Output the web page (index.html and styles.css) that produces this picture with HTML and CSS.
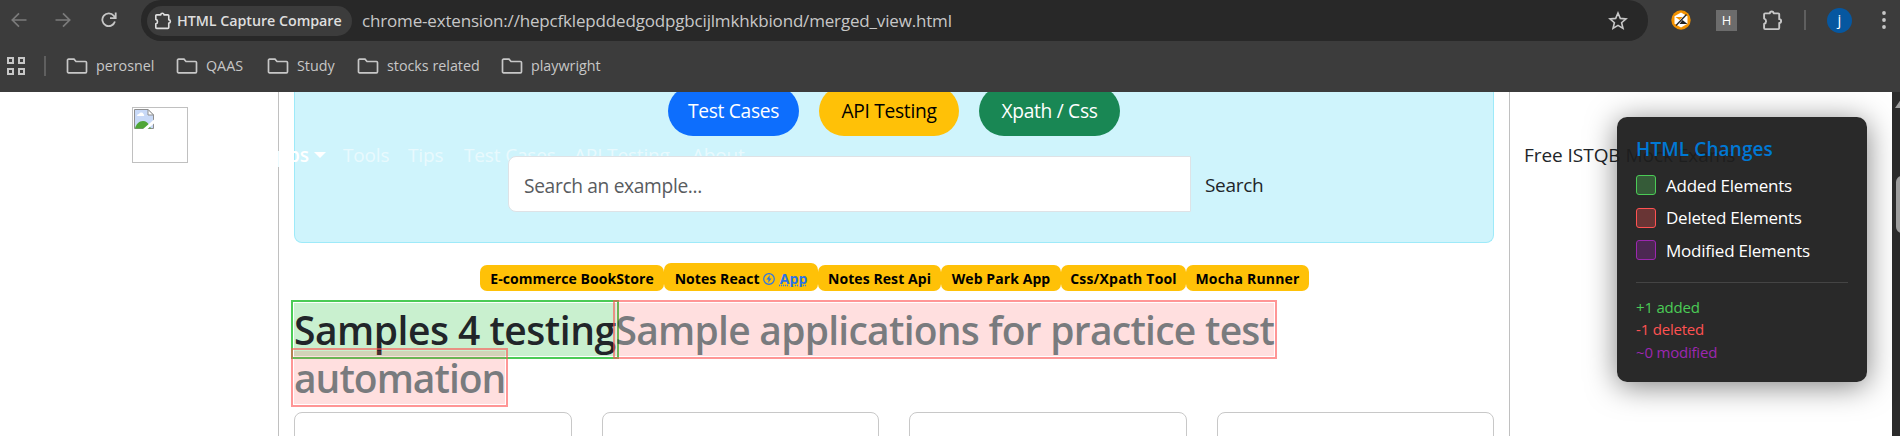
FILE: index.html
```html
<!DOCTYPE html>
<html lang="en">
<head>
<meta charset="utf-8">
<title>HTML Capture Compare</title>
<link rel="stylesheet" href="styles.css">
</head>
<body>
<svg width="0" height="0" class="defs">
  <symbol id="folder" viewBox="0 0 22 16"><path d="M2.500 1.200H8l2 2.300h9.500a1 1 0 0 1 1 1v9.300a1 1 0 0 1-1 1h-17a1 1 0 0 1-1-1V2.200a1 1 0 0 1 1-1z" fill="none" stroke="#c7c7c7" stroke-width="1.700"/></symbol>
  <symbol id="puzzle" viewBox="0 0 20 20"><path d="M2 4.200a1 1 0 0 1 1-1h4.500a1.800 1.800 0 0 1 3.600 0h4.300a1 1 0 0 1 1 1v4.500a1.800 1.800 0 0 1 0 3.600v4.900a1 1 0 0 1-1 1H3a1 1 0 0 1-1-1v-4a2.600 2.600 0 0 0 0-5z" fill="none" stroke="currentColor" stroke-width="1.800" stroke-linejoin="round"/></symbol>
</svg>
<header class="chrome">
  <div class="toolbar">
    <svg class="nav-icon" width="16" height="16" viewBox="0 0 16 16"><path d="M15.500 8H1.500M8 1.300L1.300 8 8 14.700" fill="none" stroke="#7b7b7b" stroke-width="1.700"/></svg>
    <svg class="nav-icon" width="16" height="16" viewBox="0 0 16 16"><path d="M.5 8h14M8 1.300L14.700 8 8 14.700" fill="none" stroke="#7b7b7b" stroke-width="1.700"/></svg>
    <svg class="nav-icon" width="16" height="16" viewBox="0 0 16 16"><path d="M13.900 9.500A6.400 6.400 0 1 1 12.800 3.800L14.500 5.700M14.700.5v5.700H9" fill="none" stroke="#c7c7c7" stroke-width="1.800"/></svg>
    <div class="omnibox">
      <div class="chip"><svg width="18" height="18"><use href="#puzzle"/></svg><span class="chip-text">HTML Capture Compare</span></div>
      <span class="url">chrome-extension://hepcfklepddedgodpgbcijlmkhkbiond/merged_view.html</span>
      <svg class="star" width="20" height="20" viewBox="0 0 20 20"><path d="M10 2l2.300 5.400 5.700.5-4.400 3.800 1.400 5.700-5-3-5 3 1.400-5.700L2 7.900l5.700-.5z" fill="none" stroke="#c7c7c7" stroke-width="1.600"/></svg>
    </div>
    <div class="extensions">
      <svg width="20" height="20" viewBox="0 0 20 20"><circle cx="10" cy="10" r="9.700" fill="#f39200"/><path d="M10 2.500l6.500 3.700v7.600L10 17.500l-6.500-3.700V6.200z" fill="#fff"/><path d="M4.500 7h7L8.500 10z" fill="#f39200"/><path d="M8.500 14h8l-5-4z" fill="#222"/><path d="M5 15.500L15.500 4.500" stroke="#222" stroke-width="1.300"/></svg>
      <span class="ext-h">H</span>
      <svg class="ext-puzzle" width="21" height="21"><use href="#puzzle"/></svg>
      <span class="divider"></span>
      <span class="avatar">j</span>
      <svg width="4" height="18" viewBox="0 0 4 18"><g fill="#c7c7c7"><circle cx="2" cy="2" r="1.900"/><circle cx="2" cy="9" r="1.900"/><circle cx="2" cy="16" r="1.900"/></g></svg>
    </div>
  </div>
  <nav class="bookmarks">
    <svg class="grid-icon" width="18" height="18" viewBox="0 0 18 18"><path d="M1 1h5v5H1zM12 1h5v5h-5zM1 12h5v5H1zM12 12h5v5h-5z" fill="none" stroke="#c7c7c7" stroke-width="2"/></svg>
    <span class="divider"></span>
    <a class="bm bm-1"><svg width="22" height="16"><use href="#folder"/></svg><span>perosnel</span></a>
    <a class="bm bm-2"><svg width="22" height="16"><use href="#folder"/></svg><span>QAAS</span></a>
    <a class="bm bm-3"><svg width="22" height="16"><use href="#folder"/></svg><span>Study</span></a>
    <a class="bm bm-4"><svg width="22" height="16"><use href="#folder"/></svg><span>stocks related</span></a>
    <a class="bm bm-5"><svg width="22" height="16"><use href="#folder"/></svg><span>playwright</span></a>
  </nav>
</header>
<div class="viewport">
  <aside class="left">
    <div class="logo"><svg width="20" height="20" viewBox="0 0 20 20"><path d="M.5.500h13.500l5.500 5.500v13.500H.5z" fill="#c8d9f7" stroke="#8f8f8f"/><path d="M3 7a2 2 0 0 1 2-2 2.500 2.500 0 0 1 4.500 0A1.500 1.500 0 0 1 10 7z" fill="#fff"/><path d="M1 19.500c1-4 4-7.500 8-7.500 3 0 5 2 6 4l2 3.500z" fill="#4fa637"/><path d="M14 .5V6h5.500z" fill="#fff" stroke="#8f8f8f"/><path d="M8.500 20.500L20.500 10v4L13 20.500z" fill="#fff"/></svg></div>
  </aside>
  <main class="main">
    <section class="hero">
      <div class="pills">
        <a class="pill blue"><span>Test Cases</span></a>
        <a class="pill yellow"><span>API Testing</span></a>
        <a class="pill green"><span>Xpath / Css</span></a>
      </div>
      <div class="search"><div class="field"><span>Search an example...</span></div><span class="search-btn">Search</span></div>
    </section>
    <div class="badges">
      <span class="badge b1">E-commerce BookStore</span>
      <span class="badge b2">Notes React<svg width="12" height="12" viewBox="0 0 12 12"><circle cx="6" cy="6" r="5.300" fill="none" stroke="#2a73e8" stroke-width="1.200"/><path d="M6.800 2L3.500 6.600h2L5.200 10l3.300-4.600h-2z" fill="#2a73e8"/></svg><u>App</u></span>
      <span class="badge b3">Notes Rest Api</span>
      <span class="badge b4">Web Park App</span>
      <span class="badge b5">Css/Xpath Tool</span>
      <span class="badge b6">Mocha Runner</span>
    </div>
    <h1 class="title"><ins>Samples 4 testing</ins><del>Sample applications for practice test<br><span class="wrap">automation</span></del></h1>
    <div class="cards"><div class="card"></div><div class="card"></div><div class="card"></div><div class="card"></div></div>
  </main>
  <aside class="right"><span class="exams">Free ISTQB Mock Exams</span></aside>
  <div class="scrollbar"><i class="arrow"></i><i class="thumb"></i></div>
  <nav class="sitenav">
    <a class="n1">Apps<i class="caret"></i></a><a class="n2">Tools</a><a class="n3">Tips</a><a class="n4">Test Cases</a><a class="n5">API Testing</a><a class="n6">About</a>
  </nav>
  <section class="panel">
    <h2>HTML Changes</h2>
    <div class="row"><i class="sw added"></i><span class="r1">Added Elements</span></div>
    <div class="row"><i class="sw deleted"></i><span class="r2">Deleted Elements</span></div>
    <div class="row"><i class="sw modified"></i><span class="r3">Modified Elements</span></div>
    <div class="stats"><div class="c-add"><span>+1 added</span></div><div class="c-del"><span>-1 deleted</span></div><div class="c-mod"><span>~0 modified</span></div></div>
  </section>
</div>
</body>
</html>
```

FILE: styles.css
```css
* { box-sizing: border-box; }
body { margin: 0; width: 1900px; height: 436px; overflow: hidden; font-family: "Open Sans", "Noto Sans", sans-serif; color: #212529; background: #fff; white-space: nowrap; }
.defs { position: absolute; }
svg { display: block; flex: none; }

.chrome { height: 92px; background: #3c3c3c; color: #c7c7c7; }
.toolbar { display: flex; align-items: flex-start; height: 41px; }
.nav-icon { margin: 12px 0 0 11px; }
.nav-icon + .nav-icon { margin-left: 28px; }
.nav-icon:nth-child(3) { margin-left: 30px; }
.omnibox { margin-left: 24px; width: 1507px; height: 41px; background: #282828; border-radius: 20px; display: flex; align-items: center; padding: 0 20px 0 6px; }
.chip { width: 205px; height: 30px; border-radius: 15px; background: #3c3c3c; display: flex; align-items: center; padding-left: 7px; gap: 5px; color: #dedede; }
.chip-text { font-size: 14.300px; font-weight: 600; letter-spacing: -0.050px; }
.url { margin-left: 10px; font-size: 17px; letter-spacing: -0.170px; }
.star { margin-left: auto; }
.extensions { display: flex; align-items: center; height: 40px; margin-left: 23px; }
.ext-h { margin-left: 25px; width: 21px; height: 21px; background: #6c6c6c; color: #fff; font-size: 13px; line-height: 21px; text-align: center; }
.ext-puzzle { margin-left: 25px; }
.divider { width: 2px; height: 20px; background: #5f5f5f; }
.extensions .divider { margin-left: 21px; }
.avatar { margin: 0 30px 0 21px; width: 25px; height: 25px; border-radius: 50%; background: #0657a0; color: #fff; font-size: 15px; line-height: 22px; text-align: center; }
.bookmarks { display: flex; align-items: center; height: 51px; padding: 0 0 1px 7px; }
.bookmarks .divider { margin-left: 19px; margin-right: 20px; }
.bm { display: flex; align-items: center; gap: 8px; font-size: 14.300px; flex: none; }
.bm span { margin-top: -2px; }
.bm-1 { width: 110px; }
.bm-2 { width: 91px; }
.bm-3 { width: 90px; }
.bm-4 { width: 144px; }

.viewport { position: relative; height: 344px; overflow: hidden; display: flex; background: #fff; }
.left { width: 278px; padding: 15px 0 0 132px; }
.logo { width: 56px; height: 56px; border: 1px solid #c0c0c0; padding: 1px; }
.main { width: 1232px; border: solid #c0c0c0; border-width: 0 1px; padding: 0 15px; }
.hero { height: 151px; background: #cff4fc; border: 1px solid #9eeaf9; border-top: 0; border-radius: 0 0 8px 8px; }
.pills { display: flex; justify-content: center; gap: 20px; height: 44px; align-items: flex-end; }
.pill { height: 50px; border-radius: 25px; font-size: 19.200px; letter-spacing: -0.300px; line-height: 50px; text-align: center; color: #fff; }
.blue { width: 131px; background: #0d6efd; }
.yellow { width: 140px; background: #ffc107; color: #000; }
.green { width: 141px; background: #198754; }
.search { display: flex; align-items: center; margin: 20px 0 0 213px; }
.field { position: relative; z-index: 3; width: 683px; height: 56px; border: 1px solid #dee2e6; border-radius: 8px 0 0 8px; background: #fff; color: #595c5f; font-size: 19.200px; letter-spacing: -0.350px; line-height: 57px; padding-left: 15px; }
.search-btn { margin-left: 14px; margin-top: 1px; font-size: 19px; letter-spacing: -0.300px; }
.badges { display: flex; align-items: flex-end; height: 48px; margin-left: 186px; }
.badge { height: 26px; border-radius: 7px; background: #ffc107; color: #000; font-size: 14px; font-weight: 700; letter-spacing: 0.080px; padding-top: 1px; display: flex; justify-content: center; align-items: center; }
.badge u { color: #2a73e8; text-decoration-style: dotted; }
.b2 u { margin-left: 2px; }
.b1 { width: 184px; }
.b2 { width: 154px; height: 28px; padding-top: 3px; gap: 3px; }
.b3 { width: 123px; }
.b4 { width: 120px; }
.b5 { width: 125px; letter-spacing: 0.200px; }
.b6 { width: 123px; letter-spacing: 0.200px; }
.title { margin: 15px 0 0; height: 106px; font-size: 39px; line-height: 48px; font-weight: 600; }
.title ins { text-decoration: none; letter-spacing: -0.500px; background: #c9f0cf; outline: 2px solid #4bcb56; outline-offset: 1px; }
.title del { text-decoration: none; letter-spacing: -0.750px; background: rgba(255, 82, 82, .3); outline: 2px solid #ff5252; outline-offset: 1px; opacity: .6; }
.wrap { letter-spacing: -1px; }
.cards { display: grid; grid-template-columns: repeat(4, 277.500px); gap: 30px; }
.card { height: 60px; border: 1px solid #c8c8c8; border-radius: 8px; }
.right { padding: 50px 0 0 14px; }
.exams { font-size: 19px; letter-spacing: -0.050px; }
.scrollbar { position: absolute; right: 0; top: 0; width: 8px; height: 344px; background: #2b2b2b; overflow: hidden; }
.arrow { position: absolute; left: 3px; top: 6px; border: solid transparent; border-width: 0 7px 10px; border-bottom-color: #9f9f9f; }
.thumb { position: absolute; left: 4px; top: 84px; width: 12px; height: 57px; border-radius: 6px; background: #9f9f9f; }
.sitenav { position: absolute; z-index: 2; left: 264px; top: 50px; display: flex; font-size: 19px; letter-spacing: -0.150px; color: rgba(255, 255, 255, .55); }
.sitenav a { flex: none; }
.n1 { width: 79px; color: #fff; font-weight: 600; }
.n2 { width: 65px; }
.n3 { width: 56px; }
.n4 { width: 110px; }
.n5 { width: 118px; }
.caret { display: inline-block; margin-left: 5px; border: solid transparent; border-width: 6px 6px 0; border-top-color: #fff; vertical-align: 4px; }
.panel { position: absolute; z-index: 4; left: 1617px; top: 25px; width: 250px; height: 265px; padding: 19px; border-radius: 10px; background: rgba(30, 30, 30, .95); box-shadow: 0 4px 30px rgba(0, 0, 0, .5); color: #fff; }
.panel h2 { margin: 0 0 7px; font-size: 19px; line-height: 26px; font-weight: 600; letter-spacing: 0.100px; color: #0078d4; }
.row { display: flex; align-items: center; height: 32.500px; gap: 10px; font-size: 17px; letter-spacing: -0.230px; }
.sw { width: 20px; height: 20px; border: 1px solid; border-radius: 3px; }
.added { background: #355b38; border-color: #4bcb56; }
.deleted { background: #693535; border-color: #ff5252; }
.modified { background: #4c2852; border-color: #9c27b0; }
.stats { margin-top: 15px; padding-top: 13px; border-top: 1px solid #444; font-size: 15px; letter-spacing: -0.200px; line-height: 22.500px; }
.c-add { color: #4bcb56; }
.c-del { color: #ff5252; }
.c-mod { color: #9c27b0; }
```
